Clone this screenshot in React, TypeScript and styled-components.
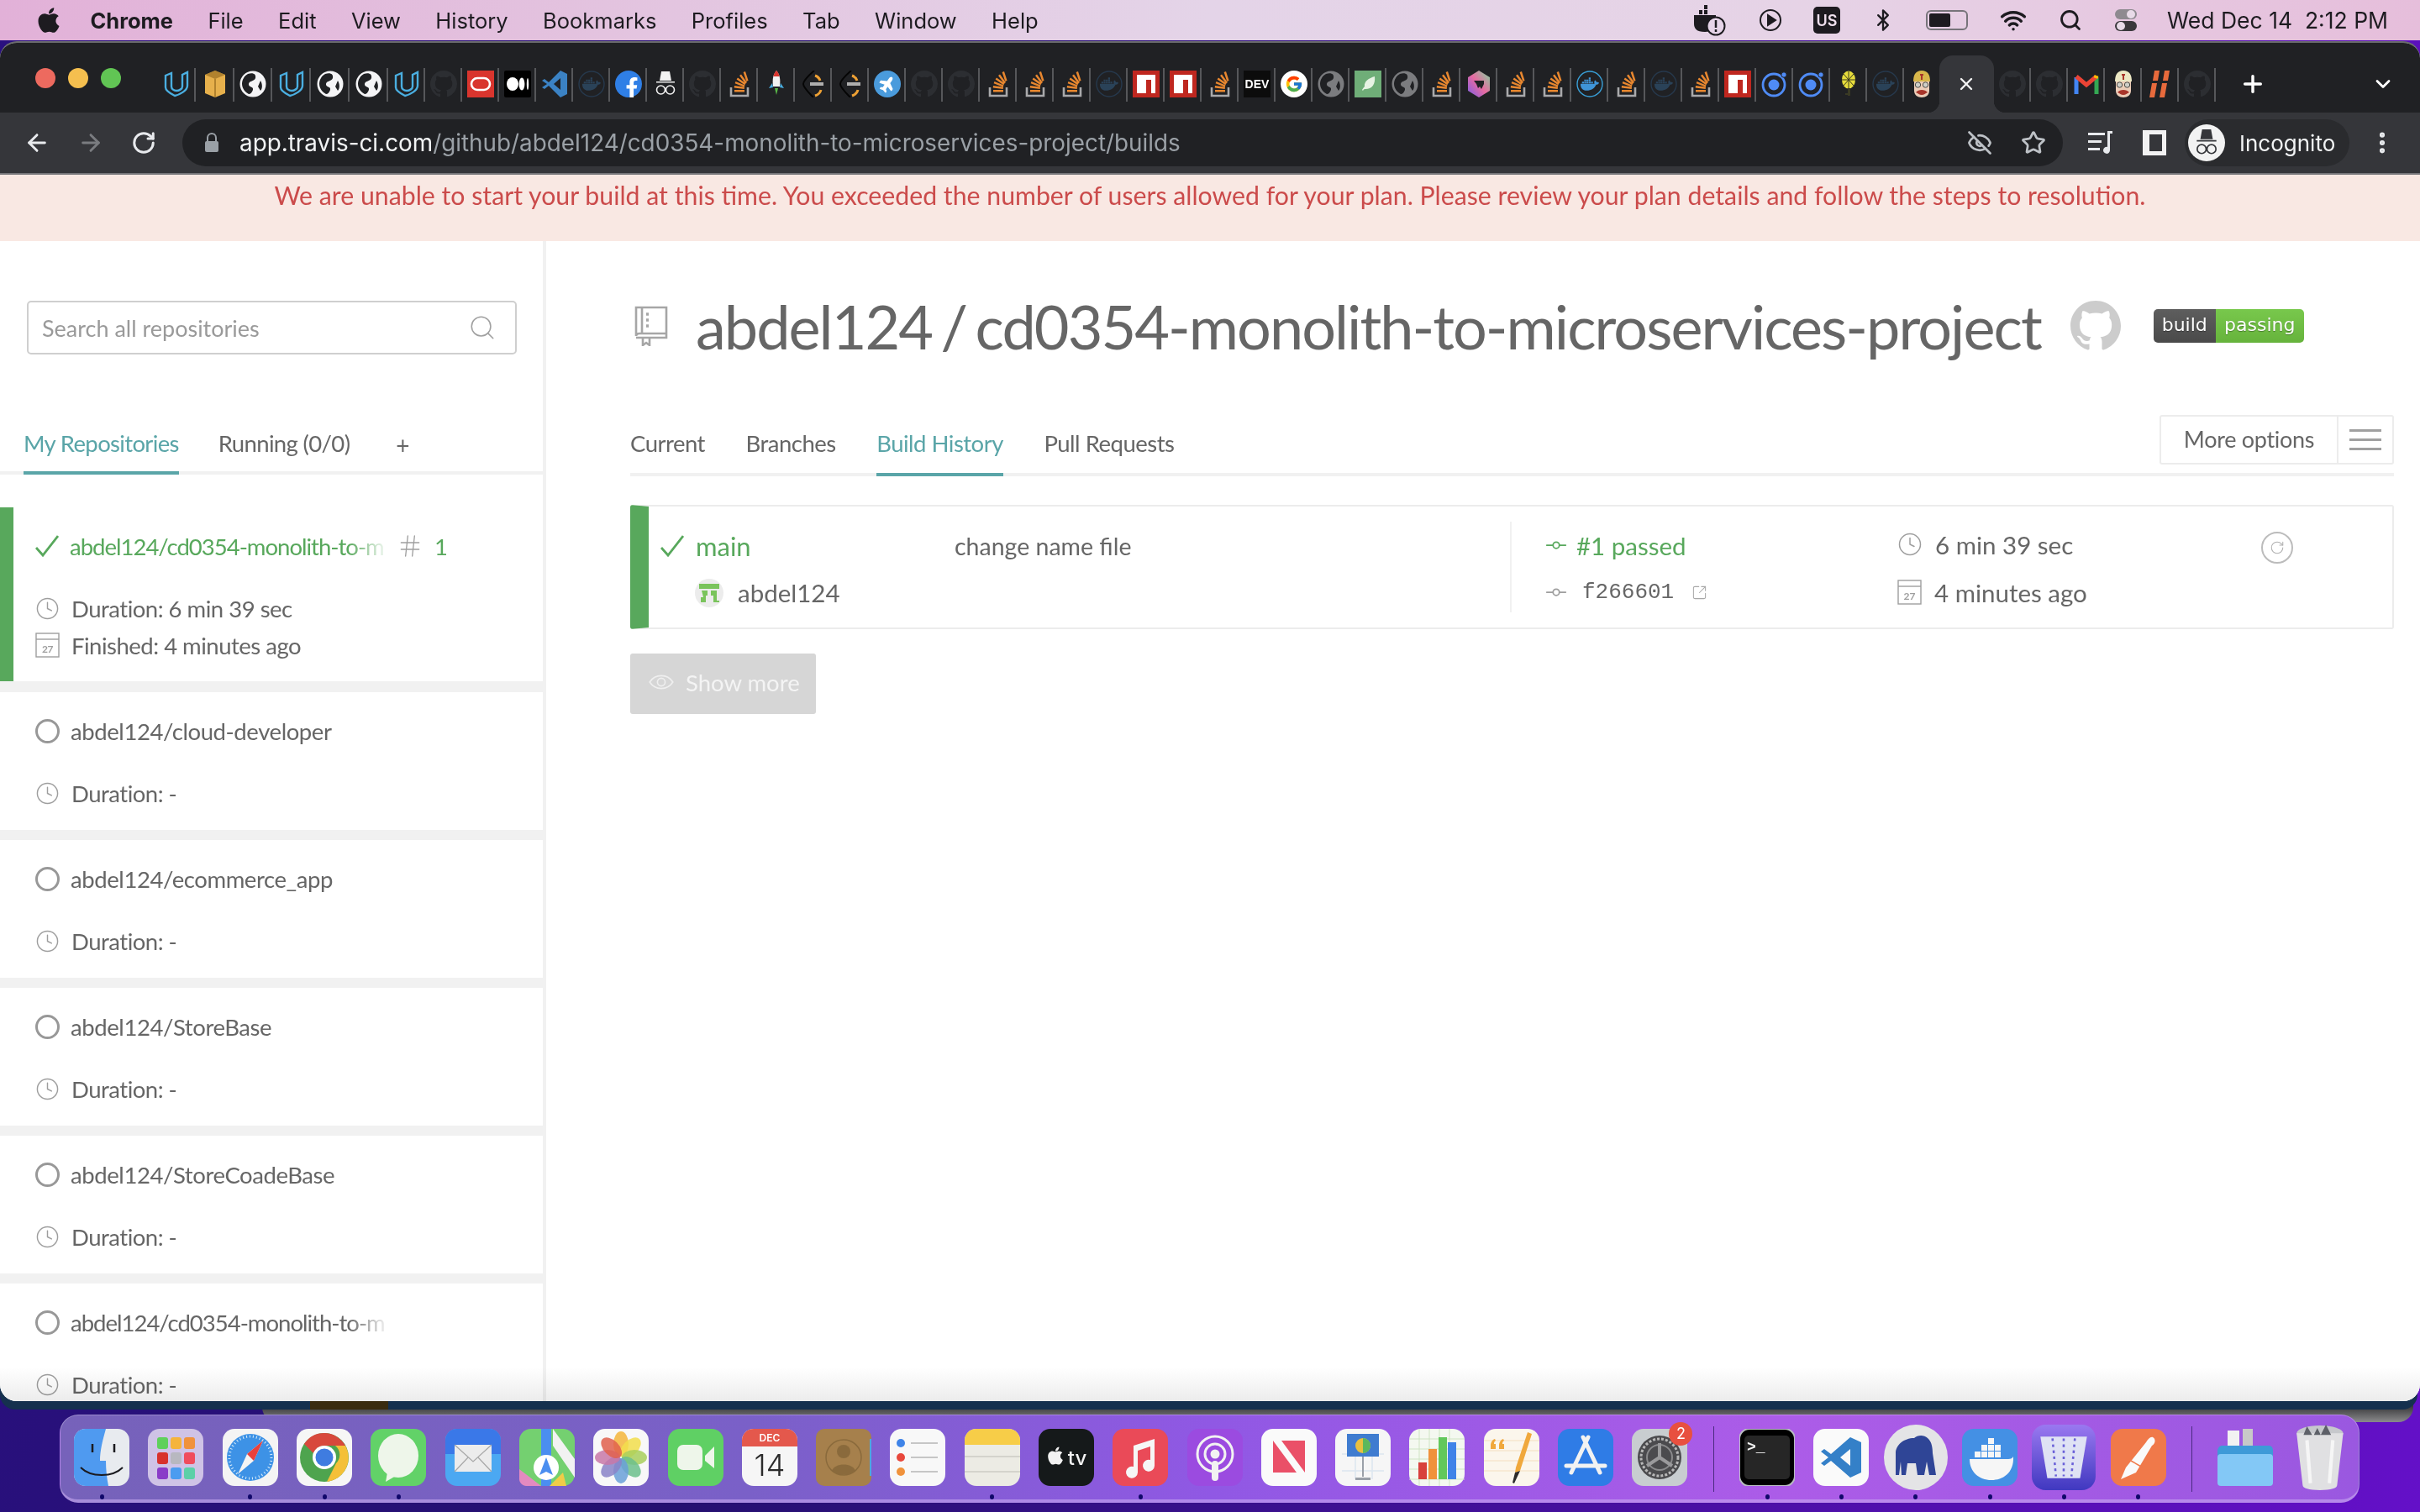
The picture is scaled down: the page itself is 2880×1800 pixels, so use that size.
import React from 'react'
import styled, { createGlobalStyle } from 'styled-components'
import {
	ArrowLeft,
	ArrowRight,
	RotateCw,
	EyeOff,
	Star,
	MoreVertical,
	Plus,
	X,
	ChevronDown,
	Clock,
	Search,
	Hash,
	GitCommitHorizontal,
	SquareArrowOutUpRight,
	Bluetooth,
	Wifi,
} from 'lucide-react'
import { FaApple, FaDocker, FaFacebookF, FaPlane } from 'react-icons/fa'
import { FcGoogle } from 'react-icons/fc'

const SANS = `Lato, 'Open Sans', sans-serif`
const SYSTEM = `Inter, Roboto, sans-serif`
const GREEN = '#58a85c'
const TEAL = '#5aa5a8'
const GREY_TEXT = '#666666'
const GH_PATH =
	'M8 0C3.58 0 0 3.58 0 8c0 3.54 2.29 6.53 5.47 7.59.4.07.55-.17.55-.38 0-.19-.01-.82-.01-1.49-2.01.37-2.53-.49-2.69-.94-.09-.23-.48-.94-.82-1.13-.28-.15-.68-.52-.01-.53.63-.01 1.08.58 1.23.82.72 1.21 1.87.87 2.33.66.07-.52.28-.87.51-1.07-1.78-.2-3.64-.89-3.64-3.95 0-.87.31-1.59.82-2.15-.08-.2-.36-1.02.08-2.12 0 0 .67-.21 2.2.82.64-.18 1.32-.27 2-.27.68 0 1.36.09 2 .27 1.53-1.04 2.2-.82 2.2-.82.44 1.1.16 1.92.08 2.12.51.56.82 1.27.82 2.15 0 3.07-1.87 3.75-3.65 3.95.29.25.54.73.54 1.48 0 1.07-.01 1.93-.01 2.2 0 .21.15.46.55.38A8.013 8.013 0 0016 8c0-4.42-3.58-8-8-8z'

const GlobalStyle = createGlobalStyle`
	html, body {
		margin: 0;
		padding: 0;
		background: #2a1080;
	}
	* {
		box-sizing: border-box;
	}
`

function Favicon({ kind }: { kind: string }) {
	switch (kind) {
		case 'udacity':
			return (
				<svg viewBox="0 0 32 32" width="32" height="32" fill="none" stroke="#4aaee0" strokeWidth="2.4">
					<path d="M3 6v14c0 4 7 8 11 10 5-1 15-6 15-12V2l-6 3v14c0 3-4 5-7 5s-6-2-6-5V3z" />
				</svg>
			)
		case 'box':
			return (
				<svg viewBox="0 0 32 32" width="32" height="32">
					<path d="M16 0l12 5v22l-12 5-12-5V5z" fill="#e6b04c" />
					<path d="M4 5l12 5 12-5-12-5zM15 10h2v22h-2z" fill="#9a6f22" opacity="0.7" />
				</svg>
			)
		case 'globe':
		case 'globeGrey':
			return (
				<svg viewBox="0 0 32 32" width="32" height="32">
					<circle cx="16" cy="16" r="15.5" fill={kind === 'globe' ? '#f4f4f6' : '#7b7c7f'} />
					<path d="M10 4c6-2 10 0 9 5-1 4-9 3-8 8 1 3 6 2 5 6-1 3-3 5-5 5-4-2-8-7-8-12 0-5 3-10 7-12zM25 12c2 3 3 9 0 12l-3-5z" fill="#202124" />
				</svg>
			)
		case 'gh':
			return (
				<svg viewBox="0 0 16 16" width="32" height="32">
					<path d={GH_PATH} fill="#2c2e32" />
				</svg>
			)
		case 'oracle':
			return (
				<svg viewBox="0 0 32 32" width="32" height="32">
					<rect width="32" height="32" fill="#d9352e" />
					<rect x="5" y="9" width="22" height="14" rx="7" fill="none" stroke="#fff" strokeWidth="2.6" />
				</svg>
			)
		case 'medium':
			return (
				<svg viewBox="0 0 32 32" width="32" height="32">
					<rect width="32" height="32" rx="2" fill="#000" />
					<ellipse cx="10" cy="16" rx="7" ry="8" fill="#fff" />
					<ellipse cx="21" cy="16" rx="3.4" ry="7.6" fill="#fff" />
					<ellipse cx="28" cy="16" rx="1.2" ry="7" fill="#fff" />
				</svg>
			)
		case 'vscode':
			return (
				<svg viewBox="0 0 32 32" width="32" height="32">
					<path d="M23 0l8 4v24l-8 4L9 18l-5 4-3-2 6-4-6-4 3-2 5 4z" fill="#3b82c4" />
					<path d="M23 9l-8 7 8 7z" fill="#202124" />
				</svg>
			)
		case 'docker':
		case 'dockerRainbow':
			return (
				<svg viewBox="0 0 32 32" width="32" height="32">
					<circle cx="16" cy="16" r="15" fill="none" stroke={kind === 'docker' ? '#26394d' : '#39a0d8'} strokeWidth="1.4" />
					<FaDocker x="5" y="5" size={22} color={kind === 'docker' ? '#2a4258' : '#3f94d8'} />
				</svg>
			)
		case 'facebook':
			return (
				<svg viewBox="0 0 32 32" width="32" height="32">
					<circle cx="16" cy="16" r="16" fill="#2f7fe6" />
					<FaFacebookF x="8" y="8" size={24} color="#fff" />
				</svg>
			)
		case 'incognito':
			return (
				<svg viewBox="0 0 32 32" width="32" height="32">
					<path d="M11 1h10l2 11H9zM5 13h22v1.6H5z" fill="#f2f2f2" />
					<circle cx="10.5" cy="23" r="5" fill="none" stroke="#f2f2f2" strokeWidth="1.6" />
					<circle cx="21.5" cy="23" r="5" fill="none" stroke="#f2f2f2" strokeWidth="1.6" />
				</svg>
			)
		case 'so':
			return (
				<svg viewBox="0 0 32 32" width="32" height="32">
					<path d="M6 20v10h20V20" fill="none" stroke="#a9a9ab" strokeWidth="2.6" />
					<path d="M10 23h12v2.6H10z" fill="#e8872f" />
					<path d="M10 18l12 1.6-.3 2.4-12-1.6zM11.5 13l11 4.4-.9 2.2-11-4.4zM14 8.5l9.6 6.8-1.4 2-9.6-6.8zM18 4.6l7 9.4-2 1.4-7-9.4zM23 1l3.6 11-2.4.8L20.6 2z" fill="#e8872f" />
				</svg>
			)
		case 'rocket':
			return (
				<svg viewBox="0 0 32 32" width="32" height="32">
					<path d="M16 0c4 5 5 10 4 19h-8c-1-9 0-14 4-19z" fill="#f2f2f2" />
					<path d="M16 0c2 2 3 4 3.6 7h-7.2c.6-3 1.6-5 3.6-7z" fill="#d9352e" />
					<path d="M11 15l-4 6 5-1zM21 15l4 6-5-1z" fill="#4aaee0" />
					<path d="M14 21h4l-2 8z" fill="#58b848" />
				</svg>
			)
		case 'lens':
			return (
				<svg viewBox="0 0 32 32" width="32" height="32" fill="none">
					<path d="M17 0C9 7 4 13 4 16c0 3 6 10 12 16" stroke="#050505" strokeWidth="2" />
					<path d="M18 6c3 1 5 3 6 6M18 30c3-1 6-3 7-7" stroke="#eda034" strokeWidth="3" />
					<path d="M12 14h16v4H12z" fill="#aeaeae" />
				</svg>
			)
		case 'plane':
			return (
				<svg viewBox="0 0 32 32" width="32" height="32">
					<circle cx="16" cy="16" r="16" fill="#4a9bdc" />
					<g transform="rotate(-55 16 16)">
						<FaPlane x="6" y="6" size={20} color="#fff" />
					</g>
				</svg>
			)
		case 'npm':
			return (
				<svg viewBox="0 0 32 32" width="32" height="32">
					<rect width="32" height="32" fill="#bf271f" />
					<path d="M5 5h22v22h-5V11h-6v16H5z" fill="#fff" />
				</svg>
			)
		case 'dev':
			return (
				<svg viewBox="0 0 32 32" width="32" height="32">
					<rect width="32" height="32" fill="#0c0c0c" />
					<text x="16" y="21" textAnchor="middle" fontFamily="'Liberation Sans', sans-serif" fontWeight="700" fontSize="14" fill="#fff">
						DEV
					</text>
				</svg>
			)
		case 'google':
			return (
				<svg viewBox="0 0 32 32" width="32" height="32">
					<circle cx="16" cy="16" r="16" fill="#fff" />
					<FcGoogle x="5" y="5" size={22} />
				</svg>
			)
		case 'leaf':
			return (
				<svg viewBox="0 0 32 32" width="32" height="32">
					<rect width="32" height="32" fill="#6fae78" />
					<path d="M24 7c1 9-3 15-11 15-1 0-2 0-3 2l-1-1c1-2 2-3 3-4-1-6 5-10 12-12z" fill="#e7f3e4" />
				</svg>
			)
		case 'rainbow':
			return (
				<svg viewBox="0 0 32 32" width="32" height="32">
					<defs>
						<linearGradient id="favRainbow" x1="0" y1="1" x2="1" y2="0">
							<stop offset="0" stopColor="#7a5ce8" />
							<stop offset="0.5" stopColor="#e86aa0" />
							<stop offset="1" stopColor="#7fd8a0" />
						</linearGradient>
					</defs>
					<path d="M16 0l13 8v16l-13 8-13-8V8z" fill="url(#favRainbow)" />
					<path d="M10 12h12v4l-3 6-2-3-2 2-2-5z" fill="#202124" />
				</svg>
			)
		case 'ionic':
			return (
				<svg viewBox="0 0 32 32" width="32" height="32">
					<circle cx="15" cy="17" r="13" fill="none" stroke="#4f8bf5" strokeWidth="2.8" />
					<circle cx="15" cy="17" r="6.5" fill="#4f8bf5" />
					<circle cx="27" cy="5" r="3.2" fill="#4f8bf5" stroke="#202124" strokeWidth="1" />
				</svg>
			)
		case 'wheel':
			return (
				<svg viewBox="0 0 32 32" width="32" height="32">
					<ellipse cx="16" cy="11" rx="8" ry="10.5" fill="#e6dc3c" />
					<path d="M16 1v20M8 11h16M10 4l12 14M22 4L10 18" stroke="#3a3a20" strokeWidth="1" />
					<path d="M15 21h3v9h-3zM12 27h6v2h-6z" fill="#3a3a24" />
				</svg>
			)
		case 'jenkins':
		case 'jenkinsLight':
			return (
				<svg viewBox="0 0 32 32" width="32" height="32">
					<path d="M16 0c7 0 10 5 10 13H6C6 5 9 0 16 0z" fill={kind === 'jenkins' ? '#d8b64a' : '#ece8c4'} />
					<path d="M14 4h4v2h-1v5h-2V6h-1z" fill="#a8352a" />
					<path d="M7 13h18v11c0 5-4 8-9 8s-9-3-9-8z" fill="#eccdb8" />
					<circle cx="11.5" cy="17" r="3.2" fill="#cfcfc8" stroke="#4b4b44" />
					<circle cx="20.5" cy="17" r="3.2" fill="#cfcfc8" stroke="#4b4b44" />
					<path d="M9 26c3-4 11-4 14 0-3 1-4 3-7 3s-4-2-7-3z" fill="#a8352a" />
				</svg>
			)
		case 'gmail':
			return (
				<svg viewBox="0 0 32 32" width="32" height="32" fill="none" strokeWidth="5">
					<path d="M4 28V8" stroke="#4285f4" />
					<path d="M28 28V8" stroke="#34a853" />
					<path d="M4 7l12 10L28 7" stroke="#ea4335" />
					<path d="M27 9l1-3" stroke="#fbbc04" />
				</svg>
			)
		case 'hash':
			return (
				<svg viewBox="0 0 32 32" width="32" height="32">
					<path d="M9 0h6l-2 12H7zM6 15h6l-3 17H3zM21 0h6l-2 12h-6zM18 15h6l-3 17h-6z" fill="#e86a3c" />
				</svg>
			)
		default:
			return null
	}
}

const tabsBeforeActive = [
	'udacity', 'box', 'globe', 'udacity', 'globe', 'globe', 'udacity', 'gh', 'oracle', 'medium', 'vscode', 'docker',
	'facebook', 'incognito', 'gh', 'so', 'rocket', 'lens', 'lens', 'plane', 'gh', 'gh', 'so', 'so', 'so', 'docker',
	'npm', 'npm', 'so', 'dev', 'google', 'globeGrey', 'leaf', 'globeGrey', 'so', 'rainbow', 'so', 'so', 'dockerRainbow',
	'so', 'docker', 'so', 'npm', 'ionic', 'ionic', 'wheel', 'docker',
]
const tabsAfterActive = ['gh', 'gh', 'gmail', 'jenkinsLight', 'hash', 'gh']

function DockArt({ kind }: { kind: string }) {
	switch (kind) {
		case 'finder':
			return (
				<>
					<rect width="66" height="68" rx="14" fill="#e8ebef" />
					<path d="M14 0h24c-4 14-7 26-7 38h7c0 10 1 20 3 30H14C6 68 0 62 0 54V14C0 6 6 0 14 0z" fill="#4f9af0" />
					<path d="M22 18v10M48 18v10" stroke="#1b1b1f" strokeWidth="2.5" />
					<path d="M8 46c12 12 38 12 50 0" stroke="#1b1b1f" strokeWidth="2" fill="none" />
				</>
			)
		case 'launchpad':
			return (
				<>
					<rect width="66" height="68" rx="14" fill="#cfc3e6" />
					{['#5fd05c', '#f5b43c', '#f0923c', '#d8322c', '#b8b8c0', '#f04c5c', '#8a3cc8', '#4c9cf0', '#5cd0a8'].map((color, i) => (
						<rect key={color} x={11 + (i % 3) * 16} y={10 + Math.floor(i / 3) * 18} width="13" height="14" rx="3" fill={color} />
					))}
				</>
			)
		case 'safari':
			return (
				<>
					<rect width="66" height="68" rx="14" fill="#f4f4f4" />
					<circle cx="33" cy="34" r="28" fill="#3d92e6" />
					<circle cx="33" cy="34" r="25" fill="none" stroke="#d8ecfa" strokeWidth="3" strokeDasharray="1 3" />
					<path d="M48 14L37 38 18 54l11-24z" fill="#f4f4f4" />
					<path d="M48 14L37 38l-8-8z" fill="#e8403c" />
				</>
			)
		case 'chrome':
			return (
				<>
					<rect width="66" height="68" rx="14" fill="#f6f6f6" />
					<circle cx="33" cy="34" r="29" fill="#4ea44e" />
					<path d="M33 5a29 29 0 0125 15H33a14 14 0 00-13 9L9 18A29 29 0 0133 5z" fill="#d8483c" />
					<path d="M58 20a29 29 0 01-22 43l11-22a14 14 0 00-1-21z" fill="#f4c038" />
					<circle cx="33" cy="34" r="14" fill="#fff" />
					<circle cx="33" cy="34" r="10.5" fill="#3f7ce0" />
				</>
			)
		case 'messages':
			return (
				<>
					<rect width="66" height="68" rx="14" fill="#62d268" />
					<ellipse cx="33" cy="32" rx="24" ry="26" fill="#eef6ea" />
					<path d="M20 52l-2 11 12-7z" fill="#eef6ea" />
				</>
			)
		case 'mail':
			return (
				<>
					<rect width="66" height="68" rx="14" fill="#4ba8f2" />
					<path d="M14 0h38c8 0 14 6 14 14v16H0V14C0 6 6 0 14 0z" fill="#3a78e8" />
					<rect x="11" y="19" width="44" height="32" rx="2" fill="#ececec" />
					<path d="M11 19l22 20 22-20M11 51l16-17M55 51L39 34" fill="none" stroke="#a8a8a8" strokeWidth="1.2" />
				</>
			)
		case 'maps':
			return (
				<>
					<rect width="66" height="68" rx="14" fill="#74d070" />
					<path d="M26 0h12v68H26z" fill="#4b8ef0" />
					<path d="M40 0l26 36v22L40 20z" fill="#f2f2f2" />
					<path d="M0 48l26 20H8c-4 0-8-4-8-8z" fill="#e48ac0" />
					<path d="M36 68h20l-4-16z" fill="#f0cc48" />
					<circle cx="32" cy="46" r="15" fill="#fff" />
					<path d="M32 34l8 21-8-4-8 4z" fill="#4b8ef0" />
				</>
			)
		case 'photos':
			return (
				<>
					<rect width="66" height="68" rx="14" fill="#f8f8f8" />
					{['#f4b63c', '#f2de4c', '#a8cf5c', '#6cc08c', '#6aa0d8', '#8a84c8', '#c878a8', '#e0604c'].map((color, i) => (
						<ellipse key={color} cx="33" cy="18" rx="9" ry="15" fill={color} opacity="0.85" transform={`rotate(${i * 45} 33 34)`} />
					))}
				</>
			)
		case 'facetime':
			return (
				<>
					<rect width="66" height="68" rx="14" fill="#5fd064" />
					<rect x="11" y="19" width="30" height="30" rx="7" fill="#eef6ea" />
					<path d="M44 32l11-11v26L44 38z" fill="#eef6ea" />
				</>
			)
		case 'calendar':
			return (
				<>
					<rect width="66" height="68" rx="14" fill="#f6f6f6" />
					<path d="M14 0h38c8 0 14 6 14 14v7H0v-7C0 6 6 0 14 0z" fill="#e4584c" />
					<text x="33" y="15" textAnchor="middle" fontFamily={SYSTEM} fontSize="12" fontWeight="600" fill="#fff">
						DEC
					</text>
					<text x="33" y="56" textAnchor="middle" fontFamily={SYSTEM} fontSize="36" fontWeight="300" fill="#2b2b2b">
						14
					</text>
				</>
			)
		case 'contacts':
			return (
				<>
					<rect width="66" height="68" rx="10" fill="#a6804c" />
					<path d="M64 12h2v44h-2z" fill="#4ba8e2" />
					<circle cx="33" cy="34" r="21" fill="none" stroke="#8a6a3c" strokeWidth="1.5" />
					<circle cx="33" cy="27" r="8" fill="#8a6a3c" />
					<path d="M19 50c3-10 25-10 28 0-6 6-22 6-28 0z" fill="#8a6a3c" />
				</>
			)
		case 'reminders':
			return (
				<>
					<rect width="66" height="68" rx="14" fill="#f8f8f8" />
					{['#3f84e8', '#e8483c', '#f0923c'].map((color, i) => (
						<g key={color}>
							<circle cx="13" cy={17 + i * 17} r="5" fill={color} />
							<path d={`M25 ${17 + i * 17}h32`} stroke="#c6c6c6" strokeWidth="2" />
						</g>
					))}
				</>
			)
		case 'notes':
			return (
				<>
					<rect width="66" height="68" rx="14" fill="#ecebe4" />
					<path d="M14 0h38c8 0 14 6 14 14v5H0v-5C0 6 6 0 14 0z" fill="#f7cd48" />
					<path d="M0 33h66M0 51h66" stroke="#d4d3cc" strokeWidth="2" />
				</>
			)
		case 'tv':
			return (
				<>
					<rect width="66" height="68" rx="14" fill="#15191a" />
					<FaApple x="8" y="20" size={24} color="#f2f2f2" />
					<text x="46" y="43" textAnchor="middle" fontFamily={SYSTEM} fontSize="24" fontWeight="500" fill="#f2f2f2">
						tv
					</text>
				</>
			)
		case 'music':
			return (
				<>
					<rect width="66" height="68" rx="14" fill="#ea4a58" />
					<path d="M25 20l25-8v32a7 7 0 11-5-7V21l-15 5v26a7 7 0 11-5-7z" fill="#f6f6f6" />
				</>
			)
		case 'podcasts':
			return (
				<>
					<rect width="66" height="68" rx="14" fill="#9b4be0" />
					<circle cx="33" cy="30" r="21" fill="none" stroke="#f2f2f2" strokeWidth="3" />
					<circle cx="33" cy="30" r="12" fill="none" stroke="#f2f2f2" strokeWidth="3" />
					<circle cx="33" cy="30" r="5.5" fill="#f2f2f2" />
					<rect x="29" y="38" width="8" height="24" rx="4" fill="#f2f2f2" />
				</>
			)
		case 'news':
			return (
				<>
					<rect width="66" height="68" rx="14" fill="#fafafa" />
					<path d="M14 14h38v38H14z" fill="#ea5068" />
					<path d="M14 14h10l28 38H42z" fill="#fafafa" />
				</>
			)
		case 'keynote':
			return (
				<>
					<rect width="66" height="68" rx="14" fill="#f6f6f6" />
					<path d="M8 50h50M8 30h50M24 30v30M44 30v30" stroke="#dbe6f0" strokeWidth="1.5" />
					<rect x="14" y="6" width="38" height="27" fill="#3f7cd0" />
					<circle cx="33" cy="20" r="9" fill="#e8c040" />
					<path d="M33 20V11a9 9 0 010 18z" fill="#5cb85c" />
					<path d="M32 33h2v24h-2zM24 58h18v3H24z" fill="#9aa0a8" />
				</>
			)
		case 'numbers':
			return (
				<>
					<rect width="66" height="68" rx="14" fill="#f4f8f0" />
					<path d="M0 12h66M0 24h66M0 36h66M0 48h66M0 60h66M12 0v68M24 0v68M36 0v68M48 0v68" stroke="#cfe4c4" strokeWidth="1" />
					<rect x="11" y="40" width="10" height="20" fill="#d8403c" />
					<rect x="23" y="24" width="10" height="36" fill="#f0923c" />
					<rect x="35" y="10" width="10" height="50" fill="#62c85c" />
					<rect x="46" y="16" width="10" height="44" fill="#3f84e8" />
				</>
			)
		case 'pages':
			return (
				<>
					<rect width="66" height="68" rx="14" fill="#fbf6ec" />
					<path d="M0 14h66M0 26h66M0 38h66M0 50h66" stroke="#f4dfc0" strokeWidth="1" />
					<path d="M8 20c0-4 2-7 5-8l1 2c-2 1-2 3-2 4h2v6H8zM18 20c0-4 2-7 5-8l1 2c-2 1-2 3-2 4h2v6h-6z" fill="#f0a83c" />
					<path d="M52 4l5 2-14 44-6 2 1-6z" fill="#f0a83c" />
					<path d="M37 52l-3 12 2 1 7-15z" fill="#2b2b2b" />
				</>
			)
		case 'appstore':
			return (
				<>
					<rect width="66" height="68" rx="14" fill="#2f7ce6" />
					<path d="M36 10L16 52M30 10l20 42M10 44h46" stroke="#f2f2f2" strokeWidth="5" strokeLinecap="round" />
				</>
			)
		case 'settings':
			return (
				<>
					<rect width="66" height="68" rx="14" fill="#c8cdd0" />
					<circle cx="33" cy="34" r="26" fill="#4b4b4e" />
					<circle cx="33" cy="34" r="22" fill="none" stroke="#b8b8b8" strokeWidth="3" strokeDasharray="3 2" />
					<circle cx="33" cy="34" r="15" fill="none" stroke="#8a8a8c" strokeWidth="2" />
					<path d="M33 34V17M33 34L18 44M33 34l15 10" stroke="#9a9a9c" strokeWidth="4" />
				</>
			)
		case 'terminal':
			return (
				<>
					<rect width="66" height="68" rx="12" fill="#000" stroke="#b8bcc0" strokeWidth="2" />
					<rect x="6" y="8" width="54" height="52" rx="5" fill="#262626" />
					<text x="9" y="27" fontFamily="'Liberation Mono', monospace" fontSize="18" fontWeight="700" fill="#f2f2f2">
						&gt;_
					</text>
				</>
			)
		case 'vscodeDock':
			return (
				<>
					<rect width="66" height="68" rx="14" fill="#fafafa" />
					<path d="M44 10l13 6v36l-13 6L21 38l-8 6-4-3 9-7-9-7 4-3 8 6z" fill="#3480c8" />
					<path d="M44 24L32 34l12 10z" fill="#fafafa" />
				</>
			)
		case 'docker':
			return (
				<>
					<rect width="66" height="68" rx="14" fill="#4490e4" />
					<path d="M9 36h46c3 0 5-1 6-3 1 20-13 28-26 28C20 61 9 51 9 36z" fill="#f6f6f6" />
					{[[15, 27], [23, 27], [31, 27], [39, 27], [23, 19], [31, 19], [39, 19], [31, 11]].map(([x, y]) => (
						<rect key={`${x}-${y}`} x={x} y={y} width="7" height="7" fill="#f6f6f6" />
					))}
				</>
			)
		case 'postman':
			return (
				<>
					<rect width="66" height="68" rx="14" fill="#f0794a" />
					<path d="M50 10c4 2 3 8-1 10L30 52 12 60l6-14 24-30c2-3 5-7 8-6z" fill="#fafafa" />
					<path d="M24 38l14 8" stroke="#f0794a" strokeWidth="1.5" />
				</>
			)
		case 'folder':
			return (
				<>
					<path d="M12 2h14v30H12z" fill="#f2f2f2" />
					<path d="M30 0h12v32H30z" fill="#c8c8c8" />
					<path d="M0 26c0-2 2-6 5-6h56c3 0 5 2 5 6v8H0z" fill="#3e9ad8" />
					<rect y="30" width="66" height="38" rx="4" fill="#83c8f6" />
				</>
			)
		default:
			return null
	}
}

const dockGroups = [
	[
		{ kind: 'finder', on: true }, { kind: 'launchpad' }, { kind: 'safari', on: true }, { kind: 'chrome', on: true },
		{ kind: 'messages', on: true }, { kind: 'mail' }, { kind: 'maps' }, { kind: 'photos' }, { kind: 'facetime' },
		{ kind: 'calendar' }, { kind: 'contacts' }, { kind: 'reminders' }, { kind: 'notes', on: true }, { kind: 'tv' },
		{ kind: 'music', on: true }, { kind: 'podcasts' }, { kind: 'news' }, { kind: 'keynote' }, { kind: 'numbers' },
		{ kind: 'pages' }, { kind: 'appstore' }, { kind: 'settings', badge: '2' },
	],
	[
		{ kind: 'terminal', on: true }, { kind: 'vscodeDock', on: true }, { kind: 'elephant', on: true },
		{ kind: 'docker', on: true }, { kind: 'film', on: true }, { kind: 'postman', on: true },
	],
	[{ kind: 'folder' }, { kind: 'trash' }],
]

function DockIcon({ kind }: { kind: string }) {
	if (kind === 'elephant') {
		return (
			<TallSvg viewBox="0 0 76 78">
				<ellipse cx="38" cy="39" rx="38" ry="39" fill="#e4e4e6" />
				<path d="M14 60V34c0-10 10-18 22-18 4-4 12-4 16 0 5 4 6 12 6 18l4 26h-8l-3-16-3 16h-8l-2-14H28l-2 14h-5l-1-16-2 16z" fill="#2f4596" />
			</TallSvg>
		)
	}
	if (kind === 'film') {
		return (
			<TallSvg viewBox="0 0 74 76">
				<defs>
					<linearGradient id="dockFilm" x1="0" y1="0" x2="0" y2="1">
						<stop offset="0" stopColor="#9a78f0" />
						<stop offset="1" stopColor="#4038c0" />
					</linearGradient>
				</defs>
				<rect width="74" height="76" rx="16" fill="url(#dockFilm)" />
				<path d="M10 14h54l-8 48H18z" fill="#dfe2f4" />
				<path d="M24 16l4 44M37 16v44M50 16l-4 44" stroke="#6a60d8" strokeWidth="2.5" strokeDasharray="3 4" />
			</TallSvg>
		)
	}
	if (kind === 'trash') {
		return (
			<TallSvg viewBox="0 0 66 76">
				<ellipse cx="33" cy="10" rx="27" ry="9" fill="#c6c8cc" />
				<path d="M6 10h54l-7 60c0 4-7 6-20 6s-20-2-20-6z" fill="#e0e0e2" />
				<path d="M18 18l4 50M48 18l-4 50" stroke="#f6f6f6" strokeWidth="4" />
				<path d="M18 2l6 10-10 0zM40 0l6 12H34zM30 4l4 8h-8z" fill="#5d6068" />
			</TallSvg>
		)
	}
	return (
		<svg viewBox="0 0 66 68" width="66" height="68">
			<DockArt kind={kind} />
		</svg>
	)
}

const repos = [
	{ name: 'abdel124/cloud-developer' },
	{ name: 'abdel124/ecommerce_app' },
	{ name: 'abdel124/StoreBase' },
	{ name: 'abdel124/StoreCoadeBase' },
	{ name: 'abdel124/cd0354-monolith-to-m', long: true },
]

const menuItems = ['File', 'Edit', 'View', 'History', 'Bookmarks', 'Profiles', 'Tab', 'Window', 'Help']

function CalendarIcon() {
	return (
		<LineSvg viewBox="0 0 29 30" width="29" height="30">
			<rect x="1" y="1" width="27" height="28" fill="none" stroke="#9e9e9e" strokeWidth="1.4" />
			<path d="M1 8h27" stroke="#9e9e9e" strokeWidth="1.4" />
			<text x="14.5" y="24" textAnchor="middle" fontFamily={SANS} fontSize="12" fontWeight="700" fill="#9e9e9e">
				27
			</text>
		</LineSvg>
	)
}

function CheckIcon() {
	return (
		<svg viewBox="0 0 28 28" width="28" height="28" fill="none" stroke={GREEN} strokeWidth="2.8">
			<path d="M1 16l8 9L27 2" />
		</svg>
	)
}

export default function App() {
	return (
		<>
			<GlobalStyle />
			<Desktop>
				<MenuBar>
					<MenuLeft>
						<FaApple size={34} color="#1d1b20" />
						<AppName>Chrome</AppName>
						{menuItems.map((item) => (
							<MenuItem key={item}>{item}</MenuItem>
						))}
					</MenuLeft>
					<MenuRight>
						<StatusSlot $width={44}>
							<svg viewBox="0 0 40 40" width="40" height="40">
								<path d="M14 2h4v5h-4zM8 8h4v5H8zM14 8h4v5h-4zM2 14h26v10c0 6-3 10-13 10S2 30 2 24z" fill="#1d1b20" />
								<circle cx="28" cy="27" r="10.5" fill="#e6d4e8" stroke="#1d1b20" strokeWidth="2" />
								<path d="M28 20v9M28 31v3" stroke="#1d1b20" strokeWidth="2.5" />
							</svg>
						</StatusSlot>
						<StatusSlot $width={28}>
							<svg viewBox="0 0 28 28" width="28" height="28" fill="none" stroke="#1d1b20" strokeWidth="2">
								<circle cx="14" cy="14" r="12" />
								<path d="M11 8l9 6-9 6z" fill="#1d1b20" />
							</svg>
						</StatusSlot>
						<UsBadge>US</UsBadge>
						<StatusSlot $width={28}>
							<Bluetooth size={30} color="#1d1b20" strokeWidth={2} />
						</StatusSlot>
						<BatteryShell>
							<BatteryFill />
						</BatteryShell>
						<StatusSlot $width={34}>
							<Wifi size={32} color="#1d1b20" strokeWidth={2.6} />
						</StatusSlot>
						<StatusSlot $width={28}>
							<Search size={28} color="#1d1b20" strokeWidth={2.4} />
						</StatusSlot>
						<StatusSlot $width={30}>
							<svg viewBox="0 0 30 30" width="30" height="30">
								<rect x="2" y="2" width="26" height="12" rx="6" fill="#8e8a90" />
								<circle cx="21" cy="8" r="5" fill="#e8dbe8" />
								<rect x="2" y="16" width="26" height="12" rx="6" fill="#3a383c" />
								<circle cx="9" cy="22" r="5" fill="#e8dbe8" />
							</svg>
						</StatusSlot>
						<Clock24>Wed Dec 14&nbsp;&nbsp;2:12 PM</Clock24>
					</MenuRight>
				</MenuBar>

				<GreyBackWindow />
				<BackWindow>
					<BackWindowPatch />
				</BackWindow>

				<Window>
					<TabStrip>
						<Lights>
							<Light $color="#ed6a5f" />
							<Light $color="#f5bf4f" />
							<Light $color="#61c554" />
						</Lights>
						<FaviconRow>
							{tabsBeforeActive.map((kind, i) => (
								<TabCell key={i} $wide={i < 6}>
									<Favicon kind={kind} />
								</TabCell>
							))}
							<TabCell $plain>
								<Favicon kind="jenkins" />
							</TabCell>
							<ActiveTab>
								<X size={24} color="#f2f2f2" strokeWidth={2.4} />
							</ActiveTab>
							{tabsAfterActive.map((kind, i) => (
								<TabCell key={i}>
									<Favicon kind={kind} />
								</TabCell>
							))}
							<NewTab>
								<Plus size={32} color="#fff" strokeWidth={2.6} />
							</NewTab>
						</FaviconRow>
						<TabMenu>
							<ChevronDown size={28} color="#fff" strokeWidth={2.4} />
						</TabMenu>
					</TabStrip>

					<Toolbar>
						<NavButtons>
							<ArrowLeft size={32} color="#e8eaed" strokeWidth={2.2} />
							<ArrowRight size={32} color="#7a7c80" strokeWidth={2.2} />
							<RotateCw size={30} color="#e8eaed" strokeWidth={2.4} />
						</NavButtons>
						<UrlPill>
							<LockShape viewBox="0 0 18 24" width="18" height="24">
								<path d="M4 10V6a5 5 0 0110 0v4" fill="none" stroke="#9aa0a6" strokeWidth="2" />
								<rect x="1" y="10" width="16" height="13" rx="2" fill="#9aa0a6" />
							</LockShape>
							<UrlText>
								<UrlHost>app.travis-ci.com</UrlHost>/github/abdel124/cd0354-monolith-to-microservices-project/builds
							</UrlText>
							<UrlActions>
								<EyeOff size={30} color="#bdc1c6" strokeWidth={2.2} />
								<Star size={30} color="#bdc1c6" strokeWidth={2.2} />
							</UrlActions>
						</UrlPill>
						<ToolbarIcons>
							<svg viewBox="0 0 32 32" width="32" height="32" fill="#e8eaed">
								<path d="M1 4h20v3H1zM1 13h16v3H1zM1 22h14v3H1zM24 2h6v3h-3v20a4 4 0 11-3-4z" />
							</svg>
							<svg viewBox="0 0 28 30" width="28" height="30">
								<path d="M0 0h28v30H0zM8 5v20h15V5z" fill="#f2f2f2" fillRule="evenodd" />
							</svg>
						</ToolbarIcons>
						<ProfilePill>
							<ProfileAvatar>
								<svg viewBox="0 0 32 32" width="34" height="34">
									<path d="M11 1h10l2 11H9zM5 13h22v1.6H5z" fill="#35363a" />
									<circle cx="10.5" cy="23" r="5" fill="none" stroke="#35363a" strokeWidth="1.6" />
									<circle cx="21.5" cy="23" r="5" fill="none" stroke="#35363a" strokeWidth="1.6" />
								</svg>
							</ProfileAvatar>
							<ProfileName>Incognito</ProfileName>
						</ProfilePill>
						<MenuDots>
							<MoreVertical size={32} color="#e8eaed" strokeWidth={2.6} />
						</MenuDots>
					</Toolbar>

					<Banner>
						We are unable to start your build at this time. You exceeded the number of users allowed for your plan. Please review your plan details and follow the steps to resolution.
					</Banner>

					<Page>
						<Sidebar>
							<SearchBox>
								<SearchHint>Search all repositories</SearchHint>
								<Search size={34} color="#a0a0a0" strokeWidth={1.1} />
							</SearchBox>
							<SideTabs>
								<SideTab $active>My Repositories</SideTab>
								<SideTab>Running (0/0)</SideTab>
								<AddTab>+</AddTab>
							</SideTabs>
							<RepoList>
								<RepoItem $active>
									<RepoTitleRow>
										<CheckIcon />
										<RepoName $green $long>abdel124/cd0354-monolith-to-m</RepoName>
										<RepoNumber>
											<Hash size={32} color="#9e9e9e" strokeWidth={1} />
											<span>1</span>
										</RepoNumber>
									</RepoTitleRow>
									<MetaRow $first>
										<Clock size={29} color="#9e9e9e" strokeWidth={1.2} />
										<span>Duration: 6 min 39 sec</span>
									</MetaRow>
									<MetaRow>
										<CalendarIcon />
										<span>Finished: 4 minutes ago</span>
									</MetaRow>
								</RepoItem>
								{repos.map((repo) => (
									<RepoItem key={repo.name}>
										<RepoTitleRow>
											<IdleRing />
											<RepoName $long={repo.long}>{repo.name}</RepoName>
										</RepoTitleRow>
										<MetaRow $first>
											<Clock size={29} color="#9e9e9e" strokeWidth={1.2} />
											<span>Duration: -</span>
										</MetaRow>
									</RepoItem>
								))}
							</RepoList>
						</Sidebar>

						<Main>
							<TitleRow>
								<svg viewBox="0 0 40 48" width="40" height="48" fill="none" stroke="#a6a6a6" strokeWidth="2.6">
									<path d="M2 36V2h36v36H2M2 36c0-2 2-3 4-3h32" />
									<path d="M9 2v31" />
									<path d="M14 10h3M14 17h3M14 24h3" strokeWidth="3.4" />
									<path d="M10 38v9l4-3 4 3v-9" />
								</svg>
								<RepoTitle>abdel124 / cd0354-monolith-to-microservices-project</RepoTitle>
								<svg viewBox="0 0 16 16" width="60" height="60">
									<path d={GH_PATH} fill="#cccccc" />
								</svg>
								<StatusBadge>
									<BadgeLabel>build</BadgeLabel>
									<BadgeValue>passing</BadgeValue>
								</StatusBadge>
							</TitleRow>

							<MainTabs>
								<MainTab>Current</MainTab>
								<MainTab>Branches</MainTab>
								<MainTab $active>Build History</MainTab>
								<MainTab>Pull Requests</MainTab>
								<MoreOptions>
									<MoreLabel>More options</MoreLabel>
									<Burger>
										<i />
										<i />
										<i />
									</Burger>
								</MoreOptions>
							</MainTabs>

							<BuildRow>
								<BuildIdentity>
									<BranchLine>
										<CheckIcon />
										<BranchName>main</BranchName>
									</BranchLine>
									<AuthorLine>
										<svg viewBox="0 0 34 34" width="34" height="34">
											<circle cx="17" cy="17" r="17" fill="#ececec" />
											<path d="M5 6h24v6H5zM8 14h7v6h-2v8H7v-6h3zM19 14h7v12h3v2h-7v-8h-3z" fill="#7ac45c" />
										</svg>
										<span>abdel124</span>
									</AuthorLine>
								</BuildIdentity>
								<CommitMessage>change name file</CommitMessage>
								<BuildStatus>
									<BuildLine $green>
										<GitCommitHorizontal size={30} color={GREEN} strokeWidth={1.4} />
										<span>#1 passed</span>
									</BuildLine>
									<BuildLine>
										<GitCommitHorizontal size={30} color="#9e9e9e" strokeWidth={1.4} />
										<CommitSha>f266601</CommitSha>
										<SquareArrowOutUpRight size={19} color="#a8a8a8" strokeWidth={1.3} />
									</BuildLine>
								</BuildStatus>
								<BuildTimes>
									<TimeLine>
										<Clock size={30} color="#9e9e9e" strokeWidth={1.2} />
										<span>6 min 39 sec</span>
									</TimeLine>
									<TimeLine>
										<CalendarIcon />
										<span>4 minutes ago</span>
									</TimeLine>
								</BuildTimes>
								<RestartCircle>
									<RotateCw size={18} color="#b0b0b0" strokeWidth={1.4} />
								</RestartCircle>
							</BuildRow>

							<ShowMore>
								<svg viewBox="0 0 32 24" width="30" height="22" fill="none" stroke="#efefef" strokeWidth="1.8">
									<path d="M1 12C8 1 24 1 31 12 24 23 8 23 1 12z" />
									<circle cx="16" cy="12" r="5" />
								</svg>
								<span>Show more</span>
							</ShowMore>
						</Main>
						<PageFade />
					</Page>
				</Window>

				<Dock>
					{dockGroups.map((group, g) => (
						<React.Fragment key={g}>
							{g > 0 && <DockDivider />}
							{group.map((app) => (
								<DockCell key={app.kind}>
									<DockArtSlot>
										<DockIcon kind={app.kind} />
										{'badge' in app && <DockBadge>{app.badge}</DockBadge>}
									</DockArtSlot>
									{'on' in app && <RunningDot />}
								</DockCell>
							))}
						</React.Fragment>
					))}
				</Dock>
			</Desktop>
		</>
	)
}

const Desktop = styled.div`
	position: relative;
	width: 2880px;
	height: 1800px;
	overflow: hidden;
	display: flex;
	flex-direction: column;
	background: linear-gradient(100deg, #2a1080 0%, #241070 35%, #6410c8 100%);
`

const MenuBar = styled.header`
	height: 48px;
	flex: none;
	display: flex;
	align-items: center;
	justify-content: space-between;
	padding: 0 38px 0 41px;
	background: linear-gradient(90deg, #e2b1d8 0%, #e3c3df 25%, #e4d4e8 50%, #e6d3e6 75%, #e6bedb 100%);
	font-family: ${SYSTEM};
	font-size: 25.5px;
	color: #1d1b20;
`

const MenuLeft = styled.nav`
	display: flex;
	align-items: center;
	gap: 41.4px;
	svg {
		margin-right: -9px;
	}
`

const AppName = styled.span`
	font-weight: 700;
`

const MenuItem = styled.span`
	font-weight: 400;
`

const MenuRight = styled.div`
	display: flex;
	align-items: center;
	gap: 37px;
`

const StatusSlot = styled.div<{ $width: number }>`
	width: ${(p) => p.$width}px;
	height: 40px;
	display: flex;
	align-items: center;
	justify-content: center;
`

const UsBadge = styled.div`
	width: 32px;
	height: 32px;
	border-radius: 5px;
	background: #1d1b20;
	color: #f0e0ee;
	font-size: 18px;
	font-weight: 600;
	display: flex;
	align-items: center;
	justify-content: center;
`

const BatteryShell = styled.div`
	width: 50px;
	height: 24px;
	border: 2px solid #77747a;
	border-radius: 6px;
	padding: 2px;
`

const BatteryFill = styled.div`
	width: 60%;
	height: 100%;
	background: #1d1b20;
	border-radius: 2px;
`

const Clock24 = styled.span`
	white-space: nowrap;
	margin-left: -3px;
	font-size: 26.5px;
`

const GreyBackWindow = styled.div`
	position: absolute;
	left: 312px;
	right: 8px;
	top: 1600px;
	height: 93px;
	border-radius: 0 0 18px 18px;
	background: linear-gradient(180deg, #3a3a3c 80%, #8a8a8c 100%);
`

const BackWindow = styled.div`
	position: absolute;
	left: 0;
	right: 3px;
	top: 1600px;
	height: 78px;
	border-radius: 0 0 18px 18px;
	background: #15304e;
`

const BackWindowPatch = styled.div`
	position: absolute;
	left: 369px;
	bottom: 0;
	width: 93px;
	height: 10px;
	background: #3a2c10;
`

const Window = styled.main`
	position: relative;
	margin-top: 1px;
	height: 1619px;
	flex: none;
	display: flex;
	flex-direction: column;
	overflow: hidden;
	border-radius: 20px;
	border-top: 2px solid #6b6b6d;
	background: #fff;
`

const TabStrip = styled.div`
	height: 83px;
	flex: none;
	display: flex;
	background: #202124;
`

const Lights = styled.div`
	width: 187px;
	flex: none;
	padding: 30px 0 0 42px;
	display: flex;
	gap: 15px;
	align-items: flex-start;
`

const Light = styled.span<{ $color: string }>`
	width: 24px;
	height: 24px;
	border-radius: 50%;
	background: ${(p) => p.$color};
`

const FaviconRow = styled.div`
	display: flex;
	align-items: flex-end;
	height: 83px;
	flex: 1;
`

const TabCell = styled.div<{ $wide?: boolean; $plain?: boolean }>`
	width: ${(p) => (p.$wide ? 45.8 : p.$plain ? 42 : 44)}px;
	flex: none;
	height: 68px;
	display: flex;
	align-items: center;
	justify-content: center;
	position: relative;
	${(p) =>
		!p.$plain &&
		`&::after {
			content: '';
			position: absolute;
			right: 0;
			top: 15px;
			height: 40px;
			width: 2px;
			background: #56575a;
		}`}
	svg {
		flex: none;
	}
`

const ActiveTab = styled.div`
	position: relative;
	width: 65px;
	height: 68px;
	flex: none;
	display: flex;
	align-items: center;
	justify-content: center;
	background: #35363a;
	border-radius: 16px 16px 0 0;
	&::before,
	&::after {
		content: '';
		position: absolute;
		bottom: 0;
		width: 14px;
		height: 14px;
	}
	&::before {
		left: -14px;
		background: radial-gradient(circle at 0 0, transparent 14px, #35363a 14.5px);
	}
	&::after {
		right: -14px;
		background: radial-gradient(circle at 100% 0, transparent 14px, #35363a 14.5px);
	}
`

const NewTab = styled.div`
	height: 68px;
	margin-left: 28px;
	display: flex;
	align-items: center;
`

const TabMenu = styled.div`
	width: 44px;
	margin-right: 22px;
	flex: none;
	display: flex;
	align-items: center;
	justify-content: center;
	padding-top: 14px;
`

const Toolbar = styled.div`
	height: 72px;
	flex: none;
	display: flex;
	align-items: center;
	background: #35363a;
	border-bottom: 0;
`

const NavButtons = styled.div`
	width: 217px;
	flex: none;
	display: flex;
	align-items: center;
	gap: 32px;
	padding-left: 28px;
`

const UrlPill = styled.div`
	width: 2238px;
	height: 56px;
	flex: none;
	display: flex;
	align-items: center;
	border-radius: 28px;
	background: #202124;
	padding: 0 20px 0 26px;
`

const LockShape = styled.svg`
	flex: none;
`

const UrlText = styled.div`
	margin-left: 24px;
	font-family: ${SYSTEM};
	font-size: 27.85px;
	color: #9aa0a6;
	white-space: nowrap;
	flex: 1;
`

const UrlHost = styled.span`
	color: #f1f3f4;
`

const UrlActions = styled.div`
	display: flex;
	align-items: center;
	gap: 34px;
`

const ToolbarIcons = styled.div`
	display: flex;
	align-items: center;
	gap: 34px;
	margin-left: 29px;
`

const ProfilePill = styled.div`
	width: 196px;
	height: 56px;
	margin-left: 22px;
	flex: none;
	display: flex;
	align-items: center;
	gap: 17px;
	border-radius: 28px;
	background: #2a2b2e;
	padding-left: 4px;
	color: #f1f3f4;
`

const ProfileAvatar = styled.div`
	width: 44px;
	height: 44px;
	border-radius: 50%;
	background: #f2f2f2;
	display: flex;
	align-items: center;
	justify-content: center;
	flex: none;
`

const ProfileName = styled.span`
	font-family: ${SYSTEM};
	font-size: 26px;
`

const MenuDots = styled.div`
	margin-left: 23px;
	display: flex;
`

const Banner = styled.div`
	height: 81px;
	flex: none;
	border-top: 2px solid #76767a;
	padding-top: 5px;
	background: #f9e8e3;
	color: #cb4b4b;
	font-family: ${SANS};
	font-size: 30.25px;
	line-height: 38px;
	text-align: center;
	white-space: nowrap;
`

const Page = styled.div`
	position: relative;
	flex: 1;
	min-height: 0;
	display: flex;
	overflow: hidden;
	background: #fff;
	color: ${GREY_TEXT};
	font-family: ${SANS};
`

const PageFade = styled.div`
	position: absolute;
	left: 0;
	right: 0;
	bottom: 0;
	height: 40px;
	background: linear-gradient(180deg, #ffffff, #ececec);
	mix-blend-mode: multiply;
	pointer-events: none;
`

const Sidebar = styled.aside`
	width: 650px;
	flex: none;
	border-right: 4px solid #f1f1f1;
	display: flex;
	flex-direction: column;
`

const SearchBox = styled.div`
	margin: 71px 0 0 32px;
	width: 583px;
	height: 64px;
	flex: none;
	display: flex;
	align-items: center;
	justify-content: space-between;
	padding: 0 22px 0 16px;
	border: 2px solid #cfcfcf;
	border-radius: 5px;
`

const SearchHint = styled.span`
	font-size: 27px;
	color: #9a9a9a;
`

const SideTabs = styled.div`
	margin-top: 84px;
	height: 59px;
	flex: none;
	display: flex;
	gap: 47px;
	padding-left: 28px;
	border-bottom: 4px solid #f1f1f1;
`

const SideTab = styled.div<{ $active?: boolean }>`
	height: 59px;
	line-height: 44px;
	font-size: 27.5px;
	letter-spacing: -0.65px;
	white-space: nowrap;
	color: ${(p) => (p.$active ? TEAL : GREY_TEXT)};
	border-bottom: 4px solid ${(p) => (p.$active ? TEAL : 'transparent')};
`

const AddTab = styled.div`
	line-height: 48px;
	font-size: 28px;
	margin-left: 8px;
`

const RepoList = styled.div`
	margin-top: 39px;
	display: flex;
	flex-direction: column;
`

const RepoItem = styled.article<{ $active?: boolean }>`
	flex: none;
	height: ${(p) => (p.$active ? 220 : 176)}px;
	padding: 29px 0 0 42px;
	border-bottom: ${(p) => (p.$active ? 13 : 12)}px solid #f1f1f1;
	${(p) => p.$active && `box-shadow: inset 16px 0 0 ${GREEN};`}
`

const RepoTitleRow = styled.div`
	height: 34px;
	display: flex;
	align-items: center;
	gap: 13px;
	font-size: 27.5px;
`

const RepoName = styled.div<{ $green?: boolean; $long?: boolean }>`
	width: 380px;
	overflow: hidden;
	white-space: nowrap;
	letter-spacing: ${(p) => (p.$long ? -1 : -0.42)}px;
	color: ${(p) => (p.$green ? GREEN : GREY_TEXT)};
	${(p) =>
		p.$long &&
		`-webkit-mask-image: linear-gradient(90deg, #000 87%, transparent 100%);
		mask-image: linear-gradient(90deg, #000 87%, transparent 100%);`}
`

const RepoNumber = styled.div`
	display: flex;
	align-items: center;
	gap: 13px;
	margin-left: -4px;
	color: ${GREEN};
`

const IdleRing = styled.span`
	width: 29px;
	height: 29px;
	flex: none;
	border-radius: 50%;
	border: 3.5px solid #989898;
`

const MetaRow = styled.div<{ $first?: boolean }>`
	height: 34px;
	margin-top: ${(p) => (p.$first ? 40 : 10)}px;
	display: flex;
	align-items: center;
	gap: 14px;
	font-size: 27.5px;
	letter-spacing: -0.5px;
	white-space: nowrap;
`

const LineSvg = styled.svg`
	flex: none;
`

const Main = styled.section`
	flex: 1;
	min-width: 0;
	padding: 0 31px 0 100px;
	display: flex;
	flex-direction: column;
`

const TitleRow = styled.div`
	height: 120px;
	margin-top: 41px;
	flex: none;
	display: flex;
	align-items: center;
	> svg:first-child {
		margin: 0 0 0 5px;
	}
`

const RepoTitle = styled.h1`
	margin: 0 35px 0 33px;
	font-size: 72px;
	font-weight: 400;
	line-height: 1;
	letter-spacing: -1.96px;
	word-spacing: -6px;
	color: ${GREY_TEXT};
	white-space: nowrap;
`

const StatusBadge = styled.div`
	margin-left: 39px;
	height: 40px;
	display: flex;
	border-radius: 5px;
	overflow: hidden;
	font-family: 'DejaVu Sans', sans-serif;
	font-size: 22px;
	line-height: 38px;
	color: #fff;
	text-shadow: 0 1px 1px rgba(0, 0, 0, 0.35);
`

const BadgeLabel = styled.span`
	width: 74px;
	text-align: center;
	background: linear-gradient(180deg, #5e5e5e, #4a4a4a);
`

const BadgeValue = styled.span`
	width: 105px;
	text-align: center;
	background: linear-gradient(180deg, #78c84c, #66b33c);
`

const MainTabs = styled.div`
	margin-top: 42px;
	height: 77px;
	flex: none;
	display: flex;
	align-items: flex-start;
	gap: 48.5px;
	border-bottom: 4px solid #f1f1f1;
	position: relative;
`

const MainTab = styled.div<{ $active?: boolean }>`
	height: 77px;
	padding-top: 16px;
	line-height: 44px;
	font-size: 27.5px;
	letter-spacing: -0.5px;
	white-space: nowrap;
	color: ${(p) => (p.$active ? TEAL : GREY_TEXT)};
	border-bottom: 4px solid ${(p) => (p.$active ? TEAL : 'transparent')};
`

const MoreOptions = styled.div`
	margin-left: auto;
	margin-top: 4px;
	width: 279px;
	height: 59px;
	display: flex;
	border: 2px solid #ececec;
	border-radius: 3px;
`

const MoreLabel = styled.div`
	width: 211px;
	text-align: center;
	line-height: 54px;
	font-size: 27px;
	letter-spacing: -0.3px;
	border-right: 2px solid #ececec;
`

const Burger = styled.div`
	flex: 1;
	display: flex;
	flex-direction: column;
	align-items: center;
	justify-content: center;
	gap: 8px;
	i {
		display: block;
		width: 38px;
		height: 3px;
		background: #a0a0a0;
	}
`

const BuildRow = styled.div`
	margin-top: 34px;
	height: 148px;
	flex: none;
	display: flex;
	border: 2px solid #ececec;
	border-left: 22px solid ${GREEN};
	border-radius: 3px;
`

const BuildIdentity = styled.div`
	width: 364px;
	flex: none;
	padding: 27px 0 0 14px;
	font-size: 29.5px;
`

const BranchLine = styled.div`
	height: 40px;
	display: flex;
	align-items: center;
	gap: 14px;
`

const BranchName = styled.span`
	font-size: 31px;
	color: ${GREEN};
`

const AuthorLine = styled.div`
	margin: 18px 0 0 41px;
	display: flex;
	align-items: center;
	gap: 17px;
`

const CommitMessage = styled.div`
	width: 663px;
	flex: none;
	font-size: 28.5px;
	line-height: 40px;
	border-right: 2px solid #f1f1f1;
	margin: 18px 0 18px 0;
	padding-top: 9px;
`

const BuildStatus = styled.div`
	width: 459px;
	flex: none;
	padding: 26px 0 0 38px;
	font-size: 29.5px;
`

const BuildLine = styled.div<{ $green?: boolean }>`
	height: 40px;
	margin-bottom: 16px;
	display: flex;
	align-items: center;
	gap: 9px;
	color: ${(p) => (p.$green ? GREEN : GREY_TEXT)};
`

const CommitSha = styled.span`
	font-family: 'Liberation Mono', monospace;
	font-size: 26px;
	margin: 0 12px 0 7px;
`

const BuildTimes = styled.div`
	width: 433px;
	flex: none;
	padding-top: 25px;
	font-size: 29.5px;
`

const TimeLine = styled.div`
	height: 40px;
	margin-bottom: 17px;
	display: flex;
	align-items: center;
	gap: 15px;
`

const RestartCircle = styled.div`
	width: 38px;
	height: 38px;
	margin-top: 30px;
	flex: none;
	border-radius: 50%;
	border: 2px solid #bcbcbc;
	display: flex;
	align-items: center;
	justify-content: center;
`

const ShowMore = styled.button`
	margin-top: 29px;
	width: 221px;
	height: 72px;
	display: flex;
	align-items: center;
	gap: 14px;
	padding: 0 0 4px 22px;
	border: 0;
	border-radius: 3px;
	background: #d6d6d6;
	color: #f4f4f4;
	font-family: ${SANS};
	font-size: 27.5px;
`

const Dock = styled.footer`
	position: relative;
	margin: 16px 72px 0 71px;
	height: 105px;
	flex: none;
	display: flex;
	padding: 16px 0 0 5px;
	border-radius: 22px;
	border: 1px solid rgba(255, 255, 255, 0.25);
	border-bottom: 4px solid rgba(200, 170, 240, 0.6);
	background: linear-gradient(90deg, #7662ba 0%, #7a60c8 30%, #9058e4 50%, #ac5ce8 75%, #9a58e0 100%);
`

const DockCell = styled.div`
	width: 88.3px;
	flex: none;
	display: flex;
	flex-direction: column;
	align-items: center;
`

const DockArtSlot = styled.div`
	position: relative;
	width: 66px;
	height: 68px;
	display: flex;
	align-items: center;
	justify-content: center;
	flex: none;
`

const TallSvg = styled.svg`
	width: auto;
	height: 78px;
	flex: none;
`

const DockBadge = styled.span`
	position: absolute;
	right: -6px;
	top: -8px;
	width: 28px;
	height: 28px;
	border-radius: 50%;
	background: #e8503f;
	color: #fff;
	font-family: ${SYSTEM};
	font-size: 18px;
	line-height: 28px;
	text-align: center;
`

const RunningDot = styled.span`
	width: 5px;
	height: 8px;
	margin-top: 10px;
	border-radius: 50%;
	background: #10086a;
`

const DockDivider = styled.div`
	width: 39.5px;
	flex: none;
	display: flex;
	justify-content: center;
	margin-top: -3px;
	height: 78px;
	&::before {
		content: '';
		width: 1px;
		height: 100%;
		background: #4a2a80;
	}
`
